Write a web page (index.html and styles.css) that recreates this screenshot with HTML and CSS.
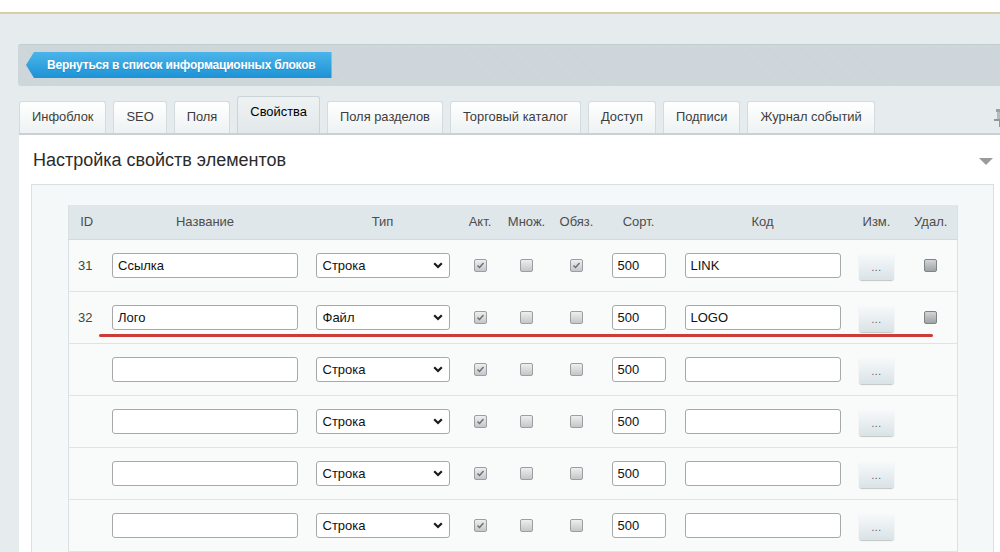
FILE: index.html
```html
<!DOCTYPE html>
<html lang="ru">
<head>
<meta charset="utf-8">
<title>Настройка свойств элементов</title>
<link rel="stylesheet" href="styles.css">
</head>
<body>
<div class="topstrip"></div>
<div class="page">
  <div class="backbar">
    <a class="backbtn" href="#">Вернуться в список информационных блоков</a>
  </div>
  <div class="tabs">
    <span class="tab">Инфоблок</span>
    <span class="tab">SEO</span>
    <span class="tab">Поля</span>
    <span class="tab active">Свойства</span>
    <span class="tab">Поля разделов</span>
    <span class="tab">Торговый каталог</span>
    <span class="tab">Доступ</span>
    <span class="tab">Подписи</span>
    <span class="tab">Журнал событий</span>
    <svg class="pin" width="14" height="18" viewBox="0 0 14 18"><rect x="3" y="0" width="8" height="3" fill="#9aa2a6"/><rect x="4" y="3" width="6" height="7" fill="#b4bbbe"/><rect x="1" y="10" width="12" height="2" fill="#8f979b"/><rect x="6" y="12" width="2" height="6" fill="#8f979b"/></svg>
  </div>
  <div class="panel">
    <div class="panel-head">
      <h2 class="title">Настройка свойств элементов</h2>
      <svg class="collapse" width="14" height="7" viewBox="0 0 14 7"><polygon points="0,0 14,0 7,7" fill="#9b9b9b"/></svg>
    </div>
    <div class="inner">
      <div class="tablewrap">
        <table class="props">
          <colgroup>
            <col class="c-id"><col class="c-name"><col class="c-type"><col class="c-act"><col class="c-mult"><col class="c-req"><col class="c-sort"><col class="c-code"><col class="c-edit"><col class="c-del">
          </colgroup>
          <thead>
            <tr><th>ID</th><th>Название</th><th>Тип</th><th>Акт.</th><th>Множ.</th><th>Обяз.</th><th>Сорт.</th><th>Код</th><th>Изм.</th><th>Удал.</th></tr>
          </thead>
          <tbody>
            <tr>
              <td class="id">31</td>
              <td><input class="inp name" value="Ссылка"></td>
              <td><div class="sel"><span>Строка</span><svg width="10" height="7" viewBox="0 0 10 7"><path d="M1.2 1.2L5 5l3.8-3.8" stroke="#1a1a1a" stroke-width="2.2" fill="none"/></svg></div></td>
              <td><span class="cb on"><svg width="11" height="11" viewBox="0 0 11 11"><path d="M2.5 5.5l2 2 4-4.5" stroke="#6a6e70" stroke-width="1.4" fill="none"/></svg></span></td>
              <td><span class="cb"></span></td>
              <td><span class="cb on"><svg width="11" height="11" viewBox="0 0 11 11"><path d="M2.5 5.5l2 2 4-4.5" stroke="#6a6e70" stroke-width="1.4" fill="none"/></svg></span></td>
              <td><input class="inp sort" value="500"></td>
              <td><input class="inp code" value="LINK"></td>
              <td><span class="btn">...</span></td>
              <td><span class="cb del"></span></td>
            </tr>
            <tr>
              <td class="id">32</td>
              <td><input class="inp name" value="Лого"></td>
              <td><div class="sel"><span>Файл</span><svg width="10" height="7" viewBox="0 0 10 7"><path d="M1.2 1.2L5 5l3.8-3.8" stroke="#1a1a1a" stroke-width="2.2" fill="none"/></svg></div></td>
              <td><span class="cb on"><svg width="11" height="11" viewBox="0 0 11 11"><path d="M2.5 5.5l2 2 4-4.5" stroke="#6a6e70" stroke-width="1.4" fill="none"/></svg></span></td>
              <td><span class="cb"></span></td>
              <td><span class="cb"></span></td>
              <td><input class="inp sort" value="500"></td>
              <td><input class="inp code" value="LOGO"></td>
              <td><span class="btn">...</span></td>
              <td><span class="cb del"></span></td>
            </tr>
            <tr>
              <td class="id"></td>
              <td><input class="inp name" value=""></td>
              <td><div class="sel"><span>Строка</span><svg width="10" height="7" viewBox="0 0 10 7"><path d="M1.2 1.2L5 5l3.8-3.8" stroke="#1a1a1a" stroke-width="2.2" fill="none"/></svg></div></td>
              <td><span class="cb on"><svg width="11" height="11" viewBox="0 0 11 11"><path d="M2.5 5.5l2 2 4-4.5" stroke="#6a6e70" stroke-width="1.4" fill="none"/></svg></span></td>
              <td><span class="cb"></span></td>
              <td><span class="cb"></span></td>
              <td><input class="inp sort" value="500"></td>
              <td><input class="inp code" value=""></td>
              <td><span class="btn">...</span></td>
              <td></td>
            </tr>
            <tr>
              <td class="id"></td>
              <td><input class="inp name" value=""></td>
              <td><div class="sel"><span>Строка</span><svg width="10" height="7" viewBox="0 0 10 7"><path d="M1.2 1.2L5 5l3.8-3.8" stroke="#1a1a1a" stroke-width="2.2" fill="none"/></svg></div></td>
              <td><span class="cb on"><svg width="11" height="11" viewBox="0 0 11 11"><path d="M2.5 5.5l2 2 4-4.5" stroke="#6a6e70" stroke-width="1.4" fill="none"/></svg></span></td>
              <td><span class="cb"></span></td>
              <td><span class="cb"></span></td>
              <td><input class="inp sort" value="500"></td>
              <td><input class="inp code" value=""></td>
              <td><span class="btn">...</span></td>
              <td></td>
            </tr>
            <tr>
              <td class="id"></td>
              <td><input class="inp name" value=""></td>
              <td><div class="sel"><span>Строка</span><svg width="10" height="7" viewBox="0 0 10 7"><path d="M1.2 1.2L5 5l3.8-3.8" stroke="#1a1a1a" stroke-width="2.2" fill="none"/></svg></div></td>
              <td><span class="cb on"><svg width="11" height="11" viewBox="0 0 11 11"><path d="M2.5 5.5l2 2 4-4.5" stroke="#6a6e70" stroke-width="1.4" fill="none"/></svg></span></td>
              <td><span class="cb"></span></td>
              <td><span class="cb"></span></td>
              <td><input class="inp sort" value="500"></td>
              <td><input class="inp code" value=""></td>
              <td><span class="btn">...</span></td>
              <td></td>
            </tr>
            <tr>
              <td class="id"></td>
              <td><input class="inp name" value=""></td>
              <td><div class="sel"><span>Строка</span><svg width="10" height="7" viewBox="0 0 10 7"><path d="M1.2 1.2L5 5l3.8-3.8" stroke="#1a1a1a" stroke-width="2.2" fill="none"/></svg></div></td>
              <td><span class="cb on"><svg width="11" height="11" viewBox="0 0 11 11"><path d="M2.5 5.5l2 2 4-4.5" stroke="#6a6e70" stroke-width="1.4" fill="none"/></svg></span></td>
              <td><span class="cb"></span></td>
              <td><span class="cb"></span></td>
              <td><input class="inp sort" value="500"></td>
              <td><input class="inp code" value=""></td>
              <td><span class="btn">...</span></td>
              <td></td>
            </tr>
          </tbody>
        </table>
        <div class="redline"></div>
      </div>
    </div>
  </div>
</div>
</body>
</html>
```

FILE: styles.css
```css
* { box-sizing: border-box; }
html, body { margin: 0; padding: 0; }
body {
  background: #e6ecee;
  font-family: "Liberation Sans", Arial, sans-serif;
  overflow: hidden;
  width: 1000px;
  height: 552px;
}
.topstrip {
  height: 14px;
  background: #fff;
  border-bottom: 2px solid #d7cfa7;
}
.page {
  padding-top: 30px;
}
.backbar {
  margin-left: 18px;
  height: 42px;
  padding: 7px 0 0 8px;
  border-radius: 3px 0 0 3px;
  border-top: 1px solid #c2ccd1;
  background-color: #ccd5d9;
  background-image: repeating-linear-gradient(45deg, rgba(255,255,255,0.06) 0 1px, transparent 1px 2px);
}
.backbtn {
  display: inline-flex;
  align-items: center;
  height: 26px;
  padding: 0 16px 0 21px;
  color: #fff;
  font-size: 12px;
  font-weight: bold;
  letter-spacing: -0.2px;
  text-decoration: none;
  background: linear-gradient(#4bb5ea, #1d92d5);
  clip-path: polygon(8px 0, 100% 0, 100% 100%, 8px 100%, 0 50%);
  text-shadow: 0 1px 0 rgba(0,0,0,0.15);
}
.tabs {
  margin-top: 10px;
  height: 37px;
  padding-left: 19px;
  display: flex;
  align-items: flex-end;
  gap: 7px;
}
.tab {
  height: 32px;
  padding: 0 12px;
  display: flex;
  align-items: center;
  padding-bottom: 2px;
  font-size: 12.9px;
  color: #3d3d3d;
  background: linear-gradient(#ffffff, #eef2f3);
  border: 1px solid #d3dbde;
  border-bottom: none;
  border-radius: 3px 3px 0 0;
}
.tab.active {
  height: 37px;
  padding-bottom: 8px;
  color: #000;
  background: linear-gradient(#eef2f3, #e2e8ea);
  border-color: #cbd4d8;
}
.pin {
  margin-left: auto;
  margin-right: -7px;
  align-self: center;
  margin-top: 6px;
}
.panel {
  margin-left: 19px;
  background: #fff;
  border-top: 2px solid #c8d1d5;
  height: 420px;
}
.panel-head {
  height: 49px;
  display: flex;
  align-items: center;
  justify-content: space-between;
  padding: 2px 7px 0 14px;
}
.title {
  margin: 0;
  font-size: 18px;
  font-weight: normal;
  color: #2b2b2b;
}
.collapse { margin-top: 1px; }
.inner {
  margin: 0 6px 0 12px;
  background: #f5f8f9;
  border: 1px solid #d7e0e3;
  padding: 20px 36px 0 36px;
  height: 380px;
}
.tablewrap {
  position: relative;
  width: 889px;
}
.props {
  width: 889px;
  border-collapse: collapse;
  table-layout: fixed;
  border-left: 1px solid #d9e1e4;
  border-right: 1px solid #d9e1e4;
}
.c-id { width: 36px; }
.c-name { width: 201px; }
.c-type { width: 154px; }
.c-act { width: 41px; }
.c-mult { width: 52px; }
.c-req { width: 48px; }
.c-sort { width: 76px; }
.c-code { width: 172px; }
.c-edit { width: 56px; }
.c-del { width: 53px; }
.props th {
  height: 34px;
  background: #e0e7ea;
  font-size: 13px;
  font-weight: normal;
  color: #4d4d4d;
  text-align: center;
  padding: 0 0 1px;
  border-bottom: 1px solid #d2dadd;
}
.props td {
  height: 52px;
  background: #f9fbfb;
  border-bottom: 1px solid #dde4e6;
  text-align: center;
  vertical-align: middle;
  padding: 1px 0 0;
}
.props td.id {
  text-align: left;
  padding-left: 9px;
  font-size: 13px;
  color: #444;
}
.inp {
  display: block;
  margin: 0 auto;
  height: 25px;
  border: 1px solid #a8a8a8;
  border-radius: 3px;
  background: #fff;
  padding: 0 5px;
  font-family: "Liberation Sans", Arial, sans-serif;
  font-size: 13px;
  color: #111;
  outline: none;
}
.inp.name { width: 186px; }
.inp.sort { width: 54px; }
.inp.code { width: 156px; }
.sel {
  width: 134px;
  height: 25px;
  margin: 0 auto;
  border: 1px solid #a8a8a8;
  border-radius: 3px;
  background: #fff;
  display: flex;
  align-items: center;
  justify-content: space-between;
  padding: 0 6px 0 6px;
  font-size: 13px;
  color: #111;
}
.cb {
  display: block;
  margin: 0 auto;
  width: 13px;
  height: 13px;
  border: 1px solid #9a9fa2;
  border-radius: 2px;
  background: linear-gradient(#eeeeee, #c3c7c9);
  position: relative;
}
.cb svg { display: block; margin: 0 auto; }
.cb.del {
  border-color: #7f8587;
  background: linear-gradient(#d3d5d6, #9ea3a5);
}
.btn {
  display: flex;
  align-items: center;
  justify-content: center;
  margin: 1px auto 0;
  width: 35px;
  height: 27px;
  border-radius: 3px;
  background: linear-gradient(#f8fafb, #d9e3e7);
  box-shadow: 0 1px 1px rgba(0,0,0,0.22);
  font-size: 10px;
  color: #555;
  letter-spacing: 0.5px;
  padding-top: 2px;
}
.redline {
  position: absolute;
  left: 31px;
  top: 129px;
  width: 834px;
  height: 3px;
  border-radius: 2px;
  background: #cb3c37;
}
```
